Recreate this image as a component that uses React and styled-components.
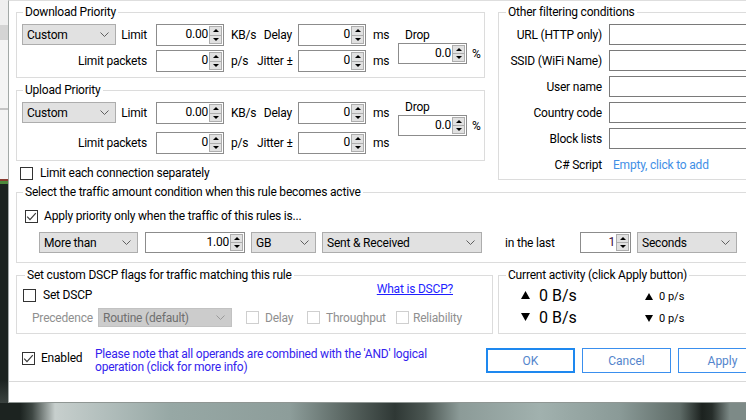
import React from "react";
import styled, { createGlobalStyle } from "styled-components";

const GlobalStyle = createGlobalStyle`
  body {
    margin: 0;
    background: #1c2320;
  }
  * {
    box-sizing: border-box;
  }
`;

const Desktop = styled.div`
  width: 746px;
  height: 420px;
  overflow: hidden;
  display: grid;
  grid-template-columns: 8px 1fr;
  grid-template-rows: 403px 17px;
  font-family: Roboto, "Noto Sans", sans-serif;
  font-size: 12px;
  letter-spacing: -0.2px;
  color: #000;
`;

const LeftStrip = styled.div`
  background: linear-gradient(
    to bottom,
    #efefef 0 25px,
    #d4d4d4 25px 40px,
    #f4f4f4 40px 108px,
    #c4c4c4 108px 110px,
    #f4f4f4 110px 179px,
    #8a3b30 179px 181px,
    #4d8a3c 181px 184px,
    #1c2320 184px 380px,
    #3a423f 403px
  );
`;

const Wallpaper = styled.div`
  grid-column: 1 / -1;
  background: linear-gradient(
    to right,
    #1c2320 0 20px,
    #3d4642 32px,
    #c7cfcd 55px,
    #b4c0be 100px,
    #97a8a5 170px,
    #8d9d9a 290px,
    #56625e 350px,
    #2f3835 395px,
    #4b5652 425px,
    #8c9b98 460px,
    #a1b1ae 540px,
    #8a9a97 620px,
    #5e6b67 680px,
    #1c221f 702px,
    #262d2a 712px,
    #7d8a87 730px
  );
`;

const Window = styled.div`
  width: 800px;
  height: 403px;
  background: #fff;
  border-left: 1px solid #a3a9a7;
  border-top: 1px solid #dedede;
  border-bottom: 1px solid #8f9693;
  padding: 3px 0 0 7px;
  display: flex;
  flex-direction: column;
`;

const TopSection = styled.div`
  display: flex;
  column-gap: 13px;
  align-items: flex-start;
`;

const LeftCol = styled.div`
  width: 469px;
  display: flex;
  flex-direction: column;
  row-gap: 4px;
`;

const GroupBox = styled.fieldset`
  margin: ${(p) => p.$mt || 0}px 0 0 0;
  padding: 0;
  min-width: 0;
  border: 1px solid #dcdcdc;
  width: ${(p) => (p.$w ? `${p.$w}px` : "auto")};
  flex: ${(p) => (p.$w ? "none" : "1")};
`;

const Legend = styled.legend`
  padding: 0 2px;
  margin-left: ${(p) => p.$indent}px;
  line-height: 16px;
  font-size: 12px;
`;

const PriorityGrid = styled.div`
  display: grid;
  grid-template-columns: 94px 40px 68px 33px 41px 68px 32px 1fr;
  grid-template-rows: 22px 22px;
  row-gap: ${(p) => p.$gap}px;
  padding: 4px 0 ${(p) => p.$bottom}px 5px;
  align-items: center;
`;

const Label = styled.div`
  text-align: ${(p) => p.$align || "left"};
  padding: 0 ${(p) => p.$pr || 0}px 0 ${(p) => p.$pl || 0}px;
  grid-column: ${(p) => p.$span || "auto"};
  width: ${(p) => (p.$w ? `${p.$w}px` : "auto")};
  flex: none;
  white-space: nowrap;
  color: ${(p) => (p.$disabled ? "#8f8f8f" : "#000")};
  line-height: 16px;
`;

const DropCell = styled.div`
  grid-column: 8;
  grid-row: 1 / span 2;
  align-self: start;
  margin-top: ${(p) => p.$offset}px;
  display: flex;
  flex-direction: column;
`;

const Inline = styled.div`
  display: flex;
  align-items: center;
  column-gap: ${(p) => p.$gap || 0}px;
`;

const ComboBox = styled.div`
  display: flex;
  align-items: center;
  justify-content: space-between;
  width: ${(p) => p.$w}px;
  height: ${(p) => p.$h || 21}px;
  align-self: start;
  flex: none;
  border: 1px solid ${(p) => (p.$disabled ? "#c2c2c2" : "#adadad")};
  background: ${(p) => (p.$disabled ? "#cccccc" : "#e1e1e1")};
  color: ${(p) => (p.$disabled ? "#6f6f6f" : "#000")};
  padding: 0 6px 0 4px;
  white-space: nowrap;
`;

const SpinBox = styled.div`
  display: flex;
  align-items: stretch;
  width: ${(p) => p.$w}px;
  height: ${(p) => p.$h || 22}px;
  flex: none;
  border: 1px solid #8c8c8c;
  background: #fff;
  padding: 1px 1px 1px 2px;
`;

const SpinValue = styled.span`
  flex: 1;
  text-align: right;
  padding-right: 1px;
  line-height: 17px;
  color: ${(p) => p.$color || "#000"};
`;

const SpinButtons = styled.div`
  width: 13px;
  display: flex;
  flex-direction: column;
`;

const SpinButton = styled.div`
  flex: 1;
  background: #e1e1e1;
  border: 1px solid #adadad;
  display: flex;
  align-items: center;
  justify-content: center;
  & + & {
    border-top: none;
  }
`;

const CheckRow = styled.label`
  display: flex;
  align-items: center;
  height: 16px;
  column-gap: ${(p) => p.$gap || 7}px;
  width: ${(p) => (p.$w ? `${p.$w}px` : "auto")};
  flex: none;
  margin-top: ${(p) => p.$mt || 0}px;
  padding-left: ${(p) => p.$pl || 0}px;
  color: ${(p) => (p.$disabled ? "#8f8f8f" : "#000")};
  white-space: nowrap;
`;

const Box = styled.span`
  width: 13px;
  height: 13px;
  flex: none;
  border: 1px solid ${(p) => (p.$disabled ? "#cfcfcf" : "#333")};
  background: #fff;
  display: flex;
  align-items: center;
  justify-content: center;
`;

const FilterGrid = styled.div`
  display: grid;
  grid-template-columns: 103px 1fr;
  column-gap: 7px;
  row-gap: 5px;
  grid-auto-rows: 21px;
  padding: 4px 0 4px 0;
  align-items: center;
`;

const TextInput = styled.div`
  height: 21px;
  border: 1px solid #7a7a7a;
  background: #fff;
`;

const Link = styled.span`
  color: ${(p) => p.$color};
  text-decoration: ${(p) => (p.$underline ? "underline" : "none")};
  cursor: pointer;
  white-space: nowrap;
`;

const TrafficBody = styled.div`
  display: flex;
  flex-direction: column;
  row-gap: 8px;
  padding: 8px 0 9px 8px;
`;

const TrafficRow = styled.div`
  display: flex;
  align-items: center;
  height: 21px;
  margin-left: 14px;
`;

const Gap = styled.span`
  width: ${(p) => p.$w}px;
  flex: none;
`;

const BottomGroups = styled.div`
  display: flex;
  column-gap: 5px;
  align-items: stretch;
  margin-top: 4px;
`;

const DscpBody = styled.div`
  display: flex;
  flex-direction: column;
  row-gap: 5px;
  padding: 4px 0 6px 6px;
`;

const DscpTop = styled.div`
  display: flex;
  justify-content: space-between;
  align-items: center;
  height: 16px;
  padding-right: 39px;
`;

const LinkTop = styled.div`
  align-self: flex-start;
  margin-top: -5px;
`;

const DscpRow = styled.div`
  display: flex;
  align-items: center;
  height: 19px;
  padding-left: 9px;
`;

const ActivityGrid = styled.div`
  display: grid;
  grid-template-columns: 124px 1fr;
  grid-template-rows: 22px 22px;
  padding: 1px 0 0 22px;
  align-items: center;
`;

const Rate = styled.div`
  display: flex;
  align-items: center;
  column-gap: ${(p) => (p.$big ? 9 : 6)}px;
  font-size: ${(p) => (p.$big ? 16 : 11)}px;
  letter-spacing: 0;
  padding-top: ${(p) => (p.$big ? 0 : 3)}px;
`;

const ActionRow = styled.div`
  display: flex;
  align-items: center;
  height: 25px;
  margin-top: 14px;
  padding-left: 6px;
`;

const Note = styled.div`
  width: 391px;
  flex: none;
  color: #3322ee;
  line-height: 13px;
  cursor: pointer;
`;

const Buttons = styled.div`
  display: flex;
  column-gap: 7px;
`;

const Button = styled.button`
  width: 89px;
  height: 25px;
  background: #fff;
  border: ${(p) => (p.$focused ? "2px solid #1e88ef" : "1px solid #3a8fee")};
  color: #5485cc;
  font-family: inherit;
  font-size: 12px;
  padding: 0;
`;

const Footer = styled.div`
  flex: 1;
  margin-top: 8px;
  margin-left: -7px;
  border-top: 1px solid #d9d9d9;
`;

const Chevron = ({ color = "#5f5f5f" }) => (
  <svg width="9" height="5" viewBox="0 0 9 5">
    <polyline points="0.5,0.5 4.5,4.5 8.5,0.5" fill="none" stroke={color} strokeWidth="1" />
  </svg>
);

const Tri = ({ up, w = 7, h = 4 }) => (
  <svg width={w} height={h} viewBox={`0 0 ${w} ${h}`}>
    <polygon points={up ? `${w / 2},0 ${w},${h} 0,${h}` : `0,0 ${w},0 ${w / 2},${h}`} fill="#000" />
  </svg>
);

const Check = () => (
  <svg width="11" height="11" viewBox="0 0 11 11">
    <polyline points="1.2,5.6 4,8.6 9.8,2.2" fill="none" stroke="#3a3a3a" strokeWidth="1.2" />
  </svg>
);

const Combo = ({ w, h, disabled, children }) => (
  <ComboBox $w={w} $h={h} $disabled={disabled}>
    <span>{children}</span>
    <Chevron color={disabled ? "#9a9a9a" : "#5f5f5f"} />
  </ComboBox>
);

const Spin = ({ w, h, value, color }) => (
  <SpinBox $w={w} $h={h}>
    <SpinValue $color={color}>{value}</SpinValue>
    <SpinButtons>
      <SpinButton>
        <Tri up w={6} h={3} />
      </SpinButton>
      <SpinButton>
        <Tri w={6} h={3} />
      </SpinButton>
    </SpinButtons>
  </SpinBox>
);

const CheckBox = ({ checked, disabled, label, gap, w, pl, mt }) => (
  <CheckRow $gap={gap} $w={w} $pl={pl} $mt={mt} $disabled={disabled}>
    <Box $disabled={disabled}>{checked && <Check />}</Box>
    {label}
  </CheckRow>
);

const Priority = ({ title, gap, bottom, dropOffset, mt }) => (
  <GroupBox $w={469} $mt={mt}>
    <Legend $indent={6}>{title}</Legend>
    <PriorityGrid $gap={gap} $bottom={bottom}>
      <Combo w={94}>Custom</Combo>
      <Label $align="right" $pr={9}>Limit</Label>
      <Spin w={68} value="0.00" />
      <Label $pl={7}>KB/s</Label>
      <Label $align="right" $pr={6}>Delay</Label>
      <Spin w={68} value="0" />
      <Label $pl={7}>ms</Label>
      <DropCell $offset={dropOffset}>
        <Label $pl={7}>Drop</Label>
        <Inline $gap={5}>
          <Spin w={69} h={21} value="0.0" />
          <span>%</span>
        </Inline>
      </DropCell>
      <Label $align="right" $pr={9} $span="1 / span 2">Limit packets</Label>
      <Spin w={68} value="0" />
      <Label $pl={7}>p/s</Label>
      <Label $align="right" $pr={6}>Jitter ±</Label>
      <Spin w={68} value="0" />
      <Label $pl={7}>ms</Label>
    </PriorityGrid>
  </GroupBox>
);

const filters = ["URL (HTTP only)", "SSID (WiFi Name)", "User name", "Country code", "Block lists"];

export default function App() {
  return (
    <>
      <GlobalStyle />
      <Desktop>
        <LeftStrip />
        <Window>
          <TopSection>
            <LeftCol>
              <Priority title="Download Priority" gap={4} bottom={5} dropOffset={3} />
              <Priority title="Upload Priority" gap={8} bottom={6} dropOffset={-3} />
              <CheckBox label="Limit each connection separately" pl={4} />
            </LeftCol>
            <GroupBox>
              <Legend $indent={7}>Other filtering conditions</Legend>
              <FilterGrid>
                {filters.map((f) => (
                  <React.Fragment key={f}>
                    <Label $align="right">{f}</Label>
                    <TextInput />
                  </React.Fragment>
                ))}
                <Label $align="right">C# Script</Label>
                <Label $pl={4}>
                  <Link $color="#3f8fe6">Empty, click to add</Link>
                </Label>
              </FilterGrid>
            </GroupBox>
          </TopSection>

          <GroupBox $mt={3}>
            <Legend $indent={6}>Select the traffic amount condition when this rule becomes active</Legend>
            <TrafficBody>
              <CheckBox checked label="Apply priority only when the traffic of this rules is..." gap={6} />
              <TrafficRow>
                <Combo w={99}>More than</Combo>
                <Gap $w={7} />
                <Spin w={100} h={21} value="1.00" />
                <Gap $w={6} />
                <Combo w={65}>GB</Combo>
                <Gap $w={6} />
                <Combo w={160}>Sent &amp; Received</Combo>
                <Gap $w={23} />
                <Label $w={75}>in the last</Label>
                <Spin w={51} h={21} value="1" color="#3a1040" />
                <Gap $w={6} />
                <Combo w={100}>Seconds</Combo>
              </TrafficRow>
            </TrafficBody>
          </GroupBox>

          <BottomGroups>
            <GroupBox $w={477}>
              <Legend $indent={8}>Set custom DSCP flags for traffic matching this rule</Legend>
              <DscpBody>
                <DscpTop>
                  <CheckBox label="Set DSCP" />
                  <LinkTop>
                    <Link $color="#1f1fff" $underline>What is DSCP?</Link>
                  </LinkTop>
                </DscpTop>
                <DscpRow>
                  <Label $disabled $w={66}>Precedence</Label>
                  <Combo w={134} h={19} disabled>Routine (default)</Combo>
                  <Gap $w={14} />
                  <CheckBox disabled label="Delay" gap={6} w={61} />
                  <CheckBox disabled label="Throughput" gap={6} w={89} />
                  <CheckBox disabled label="Reliability" gap={4} />
                </DscpRow>
              </DscpBody>
            </GroupBox>
            <GroupBox>
              <Legend $indent={7}>Current activity (click Apply button)</Legend>
              <ActivityGrid>
                <Rate $big>
                  <Tri up w={9} h={8} />
                  0 B/s
                </Rate>
                <Rate>
                  <Tri up w={8} h={7} />
                  0 p/s
                </Rate>
                <Rate $big>
                  <Tri w={9} h={8} />
                  0 B/s
                </Rate>
                <Rate>
                  <Tri w={8} h={7} />
                  0 p/s
                </Rate>
              </ActivityGrid>
            </GroupBox>
          </BottomGroups>

          <ActionRow>
            <CheckBox checked label="Enabled" gap={6} w={73} mt={-5} />
            <Note>
              Please note that all operands are combined with the 'AND' logical
              <br />
              operation (click for more info)
            </Note>
            <Buttons>
              <Button $focused>OK</Button>
              <Button>Cancel</Button>
              <Button>Apply</Button>
            </Buttons>
          </ActionRow>
          <Footer />
        </Window>
        <Wallpaper />
      </Desktop>
    </>
  );
}
